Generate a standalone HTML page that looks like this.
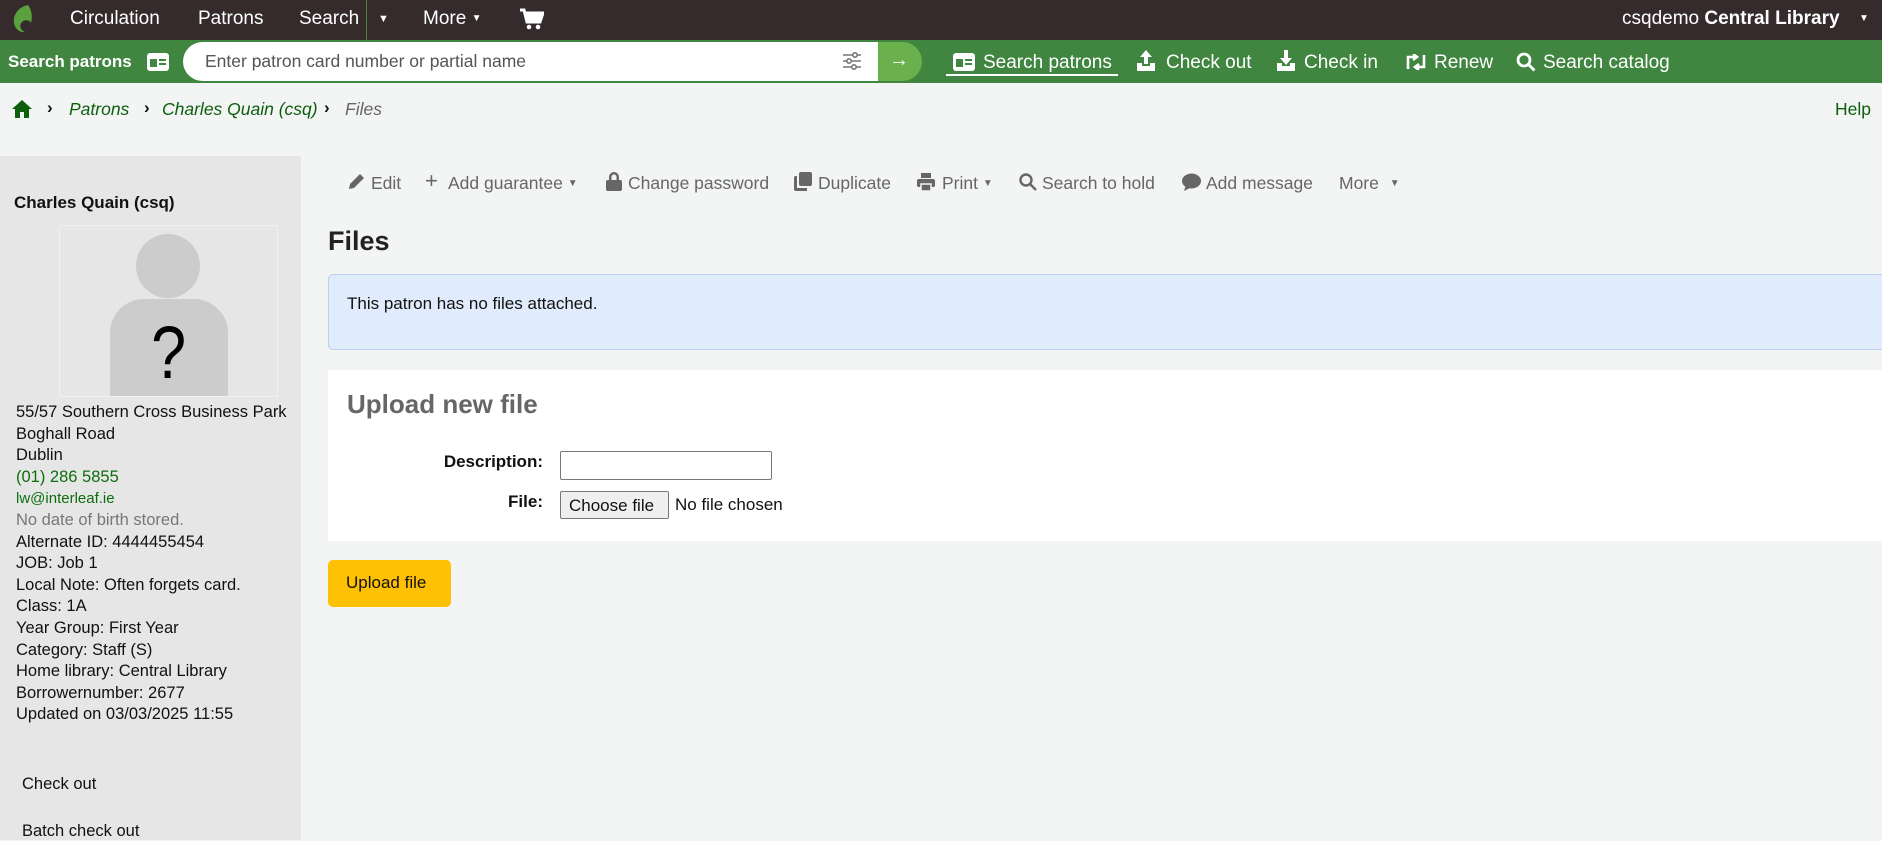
<!DOCTYPE html>
<html><head><meta charset="utf-8"><style>
*{box-sizing:border-box;margin:0;padding:0}
body{width:1882px;height:840px;overflow:hidden;background:#f3f4f4;font-family:"Liberation Sans",sans-serif;position:relative;color:#111}
.a{position:absolute;white-space:nowrap}
.top{position:absolute;left:0;top:0;width:1882px;height:40px;background:#352b2c}
.top .a{color:#fff;font-size:19px;top:8px}
.grn{position:absolute;left:0;top:40px;width:1882px;height:43px;background:#408540}
.grn .a{color:#fff;font-size:19px;top:12px}
.side{position:absolute;left:0;top:156px;width:301px;height:684px;background:#e6e6e6}
.tb{color:#666;font-size:17.5px;top:173px}
.sl{font-size:16.5px;left:16px}
</style></head><body>
<div class="top">
 <svg class="a" style="left:10px;top:3px" width="26" height="32" viewBox="0 0 26 32"><path d="M18 2C8 4 3 12 4 20c1 6 6 10 11 9-5-2-6-7-3-10 3-3 8-2 9 1 2-8 0-14-3-18z" fill="#5aa03c"/></svg>
 <span class="a" style="left:70px">Circulation</span>
 <span class="a" style="left:198px">Patrons</span>
 <span class="a" style="left:299px">Search</span>
 <div class="a" style="left:366px;top:0;width:1px;height:40px;background:#4a8a3a"></div>
 <span class="a" style="left:378px;font-size:11px;top:13px">▼</span>
 <span class="a" style="left:423px">More <span style="font-size:10px;vertical-align:3px">▼</span></span>
 <svg class="a" style="left:520px;top:8px" width="24" height="22" viewBox="0 0 24 22"><path d="M0 2h4l3 12h13l3-9H6" fill="none" stroke="#fff" stroke-width="3"/><circle cx="9" cy="19" r="2.3" fill="#fff"/><circle cx="18" cy="19" r="2.3" fill="#fff"/><path d="M6 5h17l-3 9H8z" fill="#fff"/></svg>
 <span class="a" style="left:1622px">csqdemo <b>Central Library</b></span>
 <span class="a" style="left:1859px;font-size:10px;top:13px">▼</span>
</div>
<div class="grn">
 <b class="a" style="left:8px;font-size:17px;top:12px">Search patrons</b>
 <svg class="a" style="left:147px;top:13px" width="22" height="18" viewBox="0 0 22 18"><rect width="22" height="18" rx="3" fill="#fff"/><rect x="3" y="6" width="7" height="8" fill="#408540"/><rect x="12" y="6" width="7" height="2" fill="#408540"/><rect x="12" y="10" width="7" height="2" fill="#408540"/></svg>
 <div class="a" style="left:183px;top:2px;width:706px;height:39px;background:#fff;border-radius:20px 0 0 20px"></div>
 <span class="a" style="left:205px;top:11px;color:#555;font-size:17.5px">Enter patron card number or partial name</span>
 <svg class="a" style="left:842px;top:10px" width="20" height="22" viewBox="0 0 20 22" stroke="#777" stroke-width="1.6" fill="none"><path d="M1 5h18M1 11h18M1 17h18"/><circle cx="13" cy="5" r="2.2" fill="#fff"/><circle cx="7" cy="11" r="2.2" fill="#fff"/><circle cx="12" cy="17" r="2.2" fill="#fff"/></svg>
 <div class="a" style="left:878px;top:2px;width:44px;height:39px;background:#6ab04c;border-radius:0 20px 20px 0"></div>
 <span class="a" style="left:889px;top:9px;font-size:20px;font-weight:bold">→</span>
 <svg class="a" style="left:953px;top:13px" width="22" height="18" viewBox="0 0 22 18"><rect width="22" height="18" rx="3" fill="#fff"/><rect x="3" y="6" width="7" height="8" fill="#408540"/><rect x="12" y="6" width="7" height="2" fill="#408540"/><rect x="12" y="10" width="7" height="2" fill="#408540"/></svg>
 <span class="a" style="left:983px">Search patrons</span>
 <div class="a" style="left:946px;top:34px;width:172px;height:2px;background:#fff"></div>
 <svg class="a" style="left:1136px;top:10px" width="20" height="22" viewBox="0 0 20 22" fill="#fff"><path d="M10 0l6 7h-4v7H8V7H4z"/><path d="M1 13h5v3h8v-3h5v8H1z"/></svg>
 <span class="a" style="left:1166px">Check out</span>
 <svg class="a" style="left:1276px;top:10px" width="20" height="22" viewBox="0 0 20 22" fill="#fff"><path d="M8 0h4v8h4l-6 7-6-7h4z"/><path d="M1 13h5v3h8v-3h5v8H1z"/></svg>
 <span class="a" style="left:1304px">Check in</span>
 <svg class="a" style="left:1404px;top:14px" width="24" height="16" viewBox="0 0 24 16" fill="none" stroke="#fff" stroke-width="2.6"><path d="M4 15V3h9M9 0l4 3-4 3M20 1v12h-9M15 16l-4-3 4-3"/></svg>
 <span class="a" style="left:1434px">Renew</span>
 <svg class="a" style="left:1516px;top:12px" width="20" height="20" viewBox="0 0 20 20" fill="none" stroke="#fff" stroke-width="2.8"><circle cx="8" cy="8" r="6"/><path d="M12.5 12.5l6 6"/></svg>
 <span class="a" style="left:1543px">Search catalog</span>
</div>
<svg class="a" style="left:12px;top:100px" width="20" height="18" viewBox="0 0 20 18" fill="#0d5e0d"><path d="M10 0l10 9h-3v9h-5v-6H8v6H3V9H0z"/></svg>
<span class="a" style="left:47px;top:98px;font-size:17px;font-weight:bold">›</span>
<span class="a" style="left:69px;top:99px;font-size:17.5px;color:#0d5e0d;font-style:italic">Patrons</span>
<span class="a" style="left:144px;top:98px;font-size:17px;font-weight:bold">›</span>
<span class="a" style="left:162px;top:99px;font-size:17.5px;color:#0d5e0d;font-style:italic">Charles Quain (csq)</span>
<span class="a" style="left:324px;top:98px;font-size:17px;font-weight:bold">›</span>
<span class="a" style="left:345px;top:99px;font-size:17.5px;color:#666;font-style:italic">Files</span>
<span class="a" style="left:1835px;top:99px;font-size:17.5px;color:#0d5e0d">Help</span>

<div class="side"></div>
<b class="a" style="left:14px;top:193px;font-size:17px">Charles Quain (csq)</b>
<div class="a" style="left:59px;top:225px;width:219px;height:172px;border:1px solid #f0f0f0;overflow:hidden">
 <div class="a" style="left:76px;top:8px;width:64px;height:64px;border-radius:50%;background:#ccc"></div>
 <div class="a" style="left:50px;top:73px;width:118px;height:100px;border-radius:34px 34px 0 0;background:#ccc"></div>
 <span class="a" style="left:88px;top:84px;font-size:74px;color:#000;transform:scaleX(0.85)">?</span>
</div>
<div class="a sl" style="top:402px;line-height:21.6px">55/57 Southern Cross Business Park<br>Boghall Road<br>Dublin<br><span style="color:#0d6e0d">(01) 286 5855</span><br><span style="color:#0d6e0d;font-size:15px">lw@interleaf.ie</span><br><span style="color:#777">No date of birth stored.</span><br>Alternate ID: 4444455454<br>JOB: Job 1<br>Local Note: Often forgets card.<br>Class: 1A<br>Year Group: First Year<br>Category: Staff (S)<br>Home library: Central Library<br>Borrowernumber: 2677<br>Updated on 03/03/2025 11:55</div>
<span class="a sl" style="left:22px;top:775px">Check out</span>
<span class="a sl" style="left:22px;top:822px">Batch check out</span>

<svg class="a" style="left:347px;top:173px" width="18" height="18" viewBox="0 0 18 18" fill="#666"><path d="M13 1l4 4-10 10-5 1 1-5z"/></svg>
<span class="a tb" style="left:371px">Edit</span>
<span class="a tb" style="left:425px;font-size:22px;top:168px">+</span>
<span class="a tb" style="left:448px">Add guarantee <span style="font-size:10px;vertical-align:3px">▼</span></span>
<svg class="a" style="left:606px;top:172px" width="16" height="19" viewBox="0 0 16 19" fill="#666"><path d="M3 8V5a5 5 0 0110 0v3h-2.5V5a2.5 2.5 0 00-5 0v3z"/><rect y="8" width="16" height="11" rx="2"/></svg>
<span class="a tb" style="left:628px">Change password</span>
<svg class="a" style="left:794px;top:172px" width="18" height="19" viewBox="0 0 18 19" fill="#666"><rect x="5" y="0" width="13" height="14" rx="2"/><path d="M3 4v12h10v3H2a2 2 0 01-2-2V6a2 2 0 012-2z"/></svg>
<span class="a tb" style="left:818px">Duplicate</span>
<svg class="a" style="left:917px;top:173px" width="18" height="18" viewBox="0 0 18 18" fill="#666"><rect x="4" y="0" width="10" height="5"/><rect x="0" y="6" width="18" height="8" rx="2"/><rect x="4" y="11" width="10" height="7" fill="#666" stroke="#f3f4f4" stroke-width="1.5"/></svg>
<span class="a tb" style="left:942px">Print <span style="font-size:10px;vertical-align:3px">▼</span></span>
<svg class="a" style="left:1019px;top:173px" width="18" height="18" viewBox="0 0 18 18" fill="none" stroke="#666" stroke-width="2.4"><circle cx="7" cy="7" r="5.5"/><path d="M11 11l6 6"/></svg>
<span class="a tb" style="left:1042px">Search to hold</span>
<svg class="a" style="left:1182px;top:173px" width="19" height="18" viewBox="0 0 19 18" fill="#666"><ellipse cx="9.5" cy="8" rx="9.5" ry="7.5"/><path d="M2 18l2-6 4 3z"/></svg>
<span class="a tb" style="left:1206px">Add message</span>
<span class="a tb" style="left:1339px">More <span style="font-size:10px;vertical-align:3px;margin-left:6px">▼</span></span>

<b class="a" style="left:328px;top:226px;font-size:27px;color:#222">Files</b>
<div class="a" style="left:328px;top:274px;width:1560px;height:76px;background:#e0ebfc;border:1px solid #b9d0f5;border-radius:5px"></div>
<span class="a" style="left:347px;top:294px;font-size:17px">This patron has no files attached.</span>
<div class="a" style="left:328px;top:370px;width:1560px;height:171px;background:#fff"></div>
<b class="a" style="left:347px;top:389px;font-size:26px;color:#666">Upload new file</b>
<b class="a" style="left:543px;top:452px;font-size:17px;transform:translateX(-100%)">Description:</b>
<div class="a" style="left:560px;top:451px;width:212px;height:29px;border:1px solid #777;border-radius:2px;background:#fff"></div>
<b class="a" style="left:543px;top:492px;font-size:17px;transform:translateX(-100%)">File:</b>
<div class="a" style="left:560px;top:491px;width:109px;height:28px;border:1px solid #777;border-radius:2px;background:#efefef;font-size:17px;padding:4px 0 0 8px">Choose file</div>
<span class="a" style="left:675px;top:495px;font-size:17px">No file chosen</span>
<div class="a" style="left:328px;top:560px;width:123px;height:47px;background:#fdc002;border-radius:5px;font-size:17px;padding:13px 0 0 18px">Upload file</div>
</body></html>
